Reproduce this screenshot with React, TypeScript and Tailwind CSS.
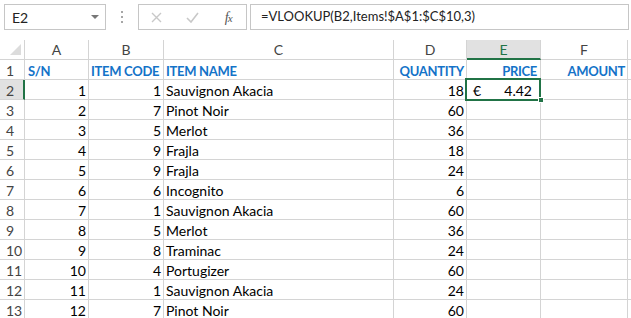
import React from "react";

const cols = ["A", "B", "C", "D", "E", "F"];
const gridCols = "grid grid-cols-[25px_64px_75px_230px_73px_74px_87px_1fr]";

const rows: [number, number, string, number][] = [
  [1, 1, "Sauvignon Akacia", 18],
  [2, 7, "Pinot Noir", 60],
  [3, 5, "Merlot", 36],
  [4, 9, "Frajla", 18],
  [5, 9, "Frajla", 24],
  [6, 6, "Incognito", 6],
  [7, 1, "Sauvignon Akacia", 60],
  [8, 5, "Merlot", 36],
  [9, 8, "Traminac", 24],
  [10, 4, "Portugizer", 60],
  [11, 1, "Sauvignon Akacia", 24],
  [12, 7, "Pinot Noir", 60],
];

const cell = "h-5 border-r border-b border-[#d4d4d4] flex items-end pb-[1px] leading-none whitespace-nowrap overflow-visible";
const head = "text-[13px] font-bold tracking-[-0.3px] text-[#1473c8]";

function FormulaBar() {
  return (
    <div className="flex items-start h-[40px] pt-1">
      {/* name box */}
      <div className="ml-1 w-[102px] h-[26px] border border-[#c6c6c6] flex items-center justify-between pl-[7px] pr-[6px]">
        <span className="text-[14px] text-[#222]">E2</span>
        <svg width="8" height="5" viewBox="0 0 8 5">
          <path d="M0 0h8L4 4z" fill="#777" />
        </svg>
      </div>
      {/* grip dots */}
      <div className="w-[32px] h-[26px] flex flex-col items-center justify-center gap-[3px]">
        <div className="w-[2px] h-[2px] bg-[#a6a6a6]" />
        <div className="w-[2px] h-[2px] bg-[#a6a6a6]" />
        <div className="w-[2px] h-[2px] bg-[#a6a6a6]" />
      </div>
      {/* cancel / enter / fx */}
      <div className="w-[109px] h-[26px] border border-[#c6c6c6] flex items-center">
        <div className="w-[36px] flex justify-center">
          <svg width="11" height="11" viewBox="0 0 11 11">
            <path d="M1 1l9 9M10 1l-9 9" stroke="#c8c8c8" strokeWidth="1.4" />
          </svg>
        </div>
        <div className="w-[36px] flex justify-center">
          <svg width="13" height="11" viewBox="0 0 13 11">
            <path d="M1 6l4 4 7-9" stroke="#c8c8c8" strokeWidth="1.6" fill="none" />
          </svg>
        </div>
        <div className="w-[36px] flex justify-center">
          <span className="text-[14px] italic text-[#555] font-['Liberation_Serif',serif] tracking-[-1px]">
            f<span className="text-[11px]">x</span>
          </span>
        </div>
      </div>
      {/* formula input */}
      <div className="ml-[3px] flex-1 mr-[2px] h-[26px] border border-[#c6c6c6] flex items-center pl-[10px]">
        <span className="text-[13px] text-[#222]">=VLOOKUP(B2,Items!$A$1:$C$10,3)</span>
      </div>
    </div>
  );
}

function ColumnHeader() {
  return (
    <div className={gridCols}>
      <div className="h-5 border-r border-b border-[#d4d4d4] relative">
        <svg className="absolute right-[3px] bottom-[4px]" width="11" height="11" viewBox="0 0 11 11">
          <path d="M11 0v11H0z" fill="#dcdcdc" />
        </svg>
      </div>
      {cols.map((c) =>
        c === "E" ? (
          <div key={c} className="h-5 bg-[#e1e1e1] border-r border-[#d4d4d4] border-b-2 border-b-[#217346] flex items-center justify-center text-[14px] text-[#217346]">
            {c}
          </div>
        ) : (
          <div key={c} className="h-5 border-r border-b border-[#d4d4d4] flex items-center justify-center text-[14px] text-[#444]">
            {c}
          </div>
        )
      )}
      <div className="h-5 border-b border-[#d4d4d4]" />
    </div>
  );
}

export default function App() {
  return (
    <div className="w-[631px] h-[318px] overflow-hidden bg-white font-['Lato',sans-serif] text-[14px] text-black">
      <FormulaBar />
      <ColumnHeader />
      {/* row 1: headings */}
      <div className={gridCols}>
        <div className={`${cell} justify-start pl-[6px] text-[#444]`}>1</div>
        <div className={`${cell} pl-[3px] ${head}`}>S/N</div>
        <div className={`${cell} pl-[2px] ${head}`}>ITEM CODE</div>
        <div className={`${cell} pl-[2px] ${head}`}>ITEM NAME</div>
        <div className={`${cell} justify-end pr-[2px] ${head}`}>QUANTITY</div>
        <div className={`${cell} justify-end pr-[3px] ${head}`}>PRICE</div>
        <div className={`${cell} justify-end pr-[2px] ${head}`}>AMOUNT</div>
        <div className="h-5 border-b border-[#d4d4d4]" />
      </div>
      {rows.map(([sn, code, name, qty], i) => {
        const r = i + 2;
        const selected = r === 2;
        return (
          <div key={r} className={gridCols}>
            {selected ? (
              <div className="h-5 bg-[#e1e1e1] border-b border-[#d4d4d4] border-r-2 border-r-[#217346] flex items-end pb-[1px] leading-none pl-[6px] text-[#444]">
                {r}
              </div>
            ) : (
              <div className={`${cell} pl-[6px] text-[#444]`}>{r}</div>
            )}
            <div className={`${cell} justify-end pr-[2px]`}>{sn}</div>
            <div className={`${cell} justify-end pr-[2px]`}>{code}</div>
            <div className={`${cell} pl-[2px]`}>{name}</div>
            <div className={`${cell} justify-end pr-[2px]`}>{qty}</div>
            {selected ? (
              <div className={`${cell} relative`}>
                <div className="absolute left-[-2px] top-[-2px] w-[76px] h-[23px] border-2 border-[#217346] flex items-end justify-between pb-[1px] pl-[6px] pr-[7px]">
                  <span>€</span>
                  <span>4.42</span>
                </div>
                <div className="absolute right-[-4px] bottom-[-4px] w-[6px] h-[6px] bg-[#217346] border border-white" />
              </div>
            ) : (
              <div className={cell} />
            )}
            <div className={cell} />
            <div className="h-5 border-b border-[#d4d4d4]" />
          </div>
        );
      })}
    </div>
  );
}
